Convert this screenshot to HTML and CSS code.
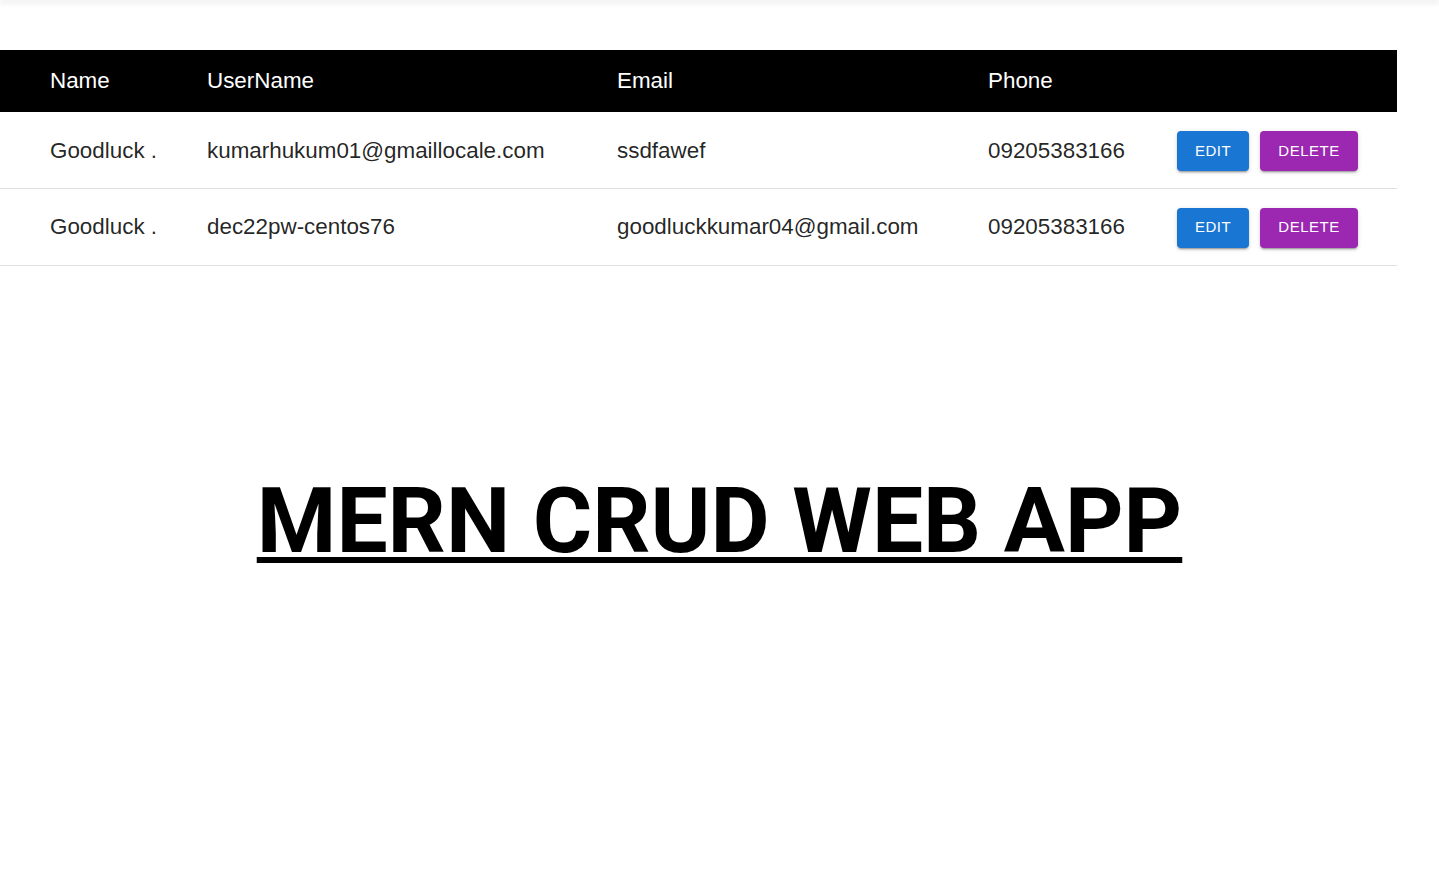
FILE: index.html
```html
<!DOCTYPE html>
<html lang="en">
<head>
<meta charset="utf-8">
<title>MERN CRUD</title>
<link rel="stylesheet" href="styles.css">
</head>
<body>
<div class="topbar"></div>
<table class="users">
  <colgroup>
    <col class="c-name"><col class="c-user"><col class="c-email"><col class="c-phone"><col class="c-act">
  </colgroup>
  <thead>
    <tr class="head-row">
      <th class="first">Name</th>
      <th>UserName</th>
      <th>Email</th>
      <th>Phone</th>
      <th></th>
    </tr>
  </thead>
  <tbody>
    <tr class="body-row">
      <td class="first">Goodluck .</td>
      <td>kumarhukum01@gmaillocale.com</td>
      <td>ssdfawef</td>
      <td>09205383166</td>
      <td class="act-cell"><div class="actions"><button class="btn btn-edit">Edit</button><button class="btn btn-delete">Delete</button></div></td>
    </tr>
    <tr class="body-row">
      <td class="first">Goodluck .</td>
      <td>dec22pw-centos76</td>
      <td>goodluckkumar04@gmail.com</td>
      <td>09205383166</td>
      <td class="act-cell"><div class="actions"><button class="btn btn-edit">Edit</button><button class="btn btn-delete">Delete</button></div></td>
    </tr>
  </tbody>
</table>
<h1 class="title">MERN CRUD WEB APP</h1>
</body>
</html>
```
FILE: styles.css
```css
html, body {
  margin: 0;
  padding: 0;
  background: #fff;
}
body {
  font-family: "Liberation Sans", Arial, sans-serif;
}
.topbar {
  position: relative;
  z-index: 1;
  height: 0;
  box-shadow: 0 1px 6px 1px rgba(0,0,0,0.18);
}
.users {
  margin-top: 50px;
  width: 1397px;
  border-collapse: collapse;
  table-layout: fixed;
}
.c-name { width: 191px; }
.c-user { width: 410px; }
.c-email { width: 371px; }
.c-phone { width: 189px; }
.c-act { width: 236px; }
.head-row {
  background: #000;
}
.head-row th {
  color: #fff;
  font-weight: 400;
  font-size: 22.4px;
  text-align: left;
  height: 62px;
  padding: 0 16px;
  box-sizing: border-box;
}
.body-row td {
  color: rgba(0,0,0,0.87);
  font-size: 22.4px;
  height: 76.5px;
  padding: 1px 16px 0;
  box-sizing: border-box;
  border-bottom: 1px solid #e0e0e0;
  white-space: nowrap;
}
.body-row .act-cell {
  padding-top: 2px;
}
.users .first {
  padding-left: 50px;
}
.actions {
  display: flex;
  gap: 11px;
  align-items: center;
}
.btn {
  border: none;
  border-radius: 4px;
  height: 40px;
  padding: 0 0 2px;
  color: #fff;
  font-family: "Liberation Sans", Arial, sans-serif;
  font-size: 15px;
  letter-spacing: 0.5px;
  text-transform: uppercase;
  box-shadow: 0 3px 1px -2px rgba(0,0,0,0.2), 0 2px 2px 0 rgba(0,0,0,0.14), 0 1px 5px 0 rgba(0,0,0,0.12);
  cursor: pointer;
}
.btn-edit {
  background: #1976d2;
  width: 72px;
}
.btn-delete {
  background: #9c27b0;
  width: 98px;
}
.title {
  margin: 201px 0 0;
  text-align: center;
  font-family: Roboto, "Liberation Sans", Arial, sans-serif;
  font-weight: 700;
  font-size: 91px;
  line-height: 1.2;
  color: #000;
  text-decoration: underline;
  text-decoration-thickness: 6px;
  text-underline-offset: 5px;
}
```
